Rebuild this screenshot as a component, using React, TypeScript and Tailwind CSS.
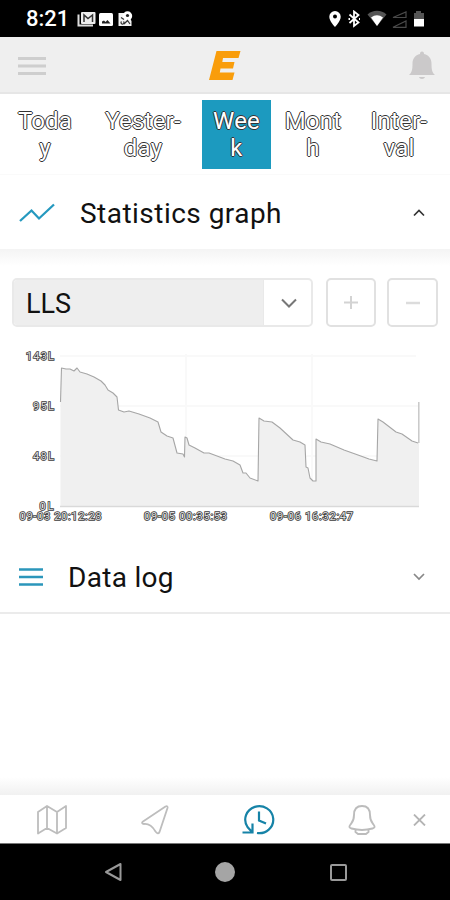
import type { ReactNode } from 'react';

interface Tab {
  lines: string[];
  width: string;
  active?: boolean;
}

const tabs: Tab[] = [
  { lines: ['Toda', 'y'], width: 'w-[70px]' },
  { lines: ['Yester-', 'day'], width: 'ml-[14px] w-[98px]' },
  { lines: ['Wee', 'k'], width: 'ml-[10px] w-[69px]', active: true },
  { lines: ['Mont', 'h'], width: 'ml-[7px] w-[70px]' },
  { lines: ['Inter-', 'val'], width: 'ml-[16px] w-[70px]' },
];

const levels =
  '60.5,62 61.5,28 66,29 70,29 74,31 77,28 80,32 87,34 94,37 101,41 105,45 108,50 113,53 117,57 118.5,70 124,72 129,71 139,74 150,78 158,82 161,92 167,96 173,98 177,113 183,114 184.5,117 185,97 187,98 189,105 195,108 204,113 209,113 225,119 233,121 240,125 243,133 246,133 250,138 258,141 259,78 264,81 272,82 280,88 293,100 300,102 305,105 306,127 308,128 310,138 313,141 316,141 316,99 321,102 330,104 344,110 358,115 369,119 377,121 378,79 383,82 396,92 402,94 412,101 418,103';

function Chart() {
  const outline = '[paint-order:stroke] stroke-[#3c3c3c] stroke-[1.6px] fill-[#ddd]';

  return (
    <svg className="block h-[198px] w-[450px]" viewBox="0 0 450 198">
      <g fill="none" stroke="#f9f9f9" strokeWidth="2">
        <path d="M60 16H416M60 66H419M60 116H419M186 14V167M312 14V167" />
      </g>
      <polygon points={`60.5,167 ${levels} 419,103 419,167`} fill="#f0f0f0" />
      <path d="M60 166.5H419" stroke="#d9d9d9" strokeWidth="1.5" />
      <polyline points={levels} fill="none" stroke="#a6a6a6" strokeWidth="1.1" strokeLinejoin="round" />
      <path d="M418.8 62V103" stroke="#c8c8c8" strokeWidth="1.5" />
      <g className={outline} fontSize="11">
        <text x="26" y="19.5" textLength="28">143L</text>
        <text x="33" y="69.5" textLength="21">95L</text>
        <text x="33" y="120" textLength="21">48L</text>
        <text x="39.5" y="170" textLength="14">0L</text>
      </g>
      <g className={outline} fontSize="11" textAnchor="middle">
        <text x="60.5" y="180" textLength="82">09-03 20:12:28</text>
        <text x="185.5" y="180" textLength="83">09-05 00:35:53</text>
        <text x="311.5" y="180" textLength="83">09-06 16:32:47</text>
      </g>
    </svg>
  );
}

function StatusBar() {
  return (
    <div className="flex h-[37px] shrink-0 items-center bg-black pl-[26px] pr-[24px] pt-px text-white">
      <span className="w-[51px] text-[22px] font-medium leading-none">8:21</span>
      <svg width="56" height="16" viewBox="0 0 56 16">
        <path d="M1.5 3.5V14.5H16" fill="none" stroke="#ddd" strokeWidth="2" />
        <rect x="4" y="1" width="14.5" height="12" rx="1" fill="#eee" />
        <path d="M7 11V4L11 7.500L15.500 4V11" fill="none" stroke="#333" strokeWidth="1.5" />
        <rect x="22" y="2" width="14" height="13" rx="1.500" fill="#fff" />
        <path d="M25 12.500v-2l2-1 1.500 1.500 2-2 3 3.500z" fill="#222" />
        <path d="M41.500 2h8l5 8v5h-13z" fill="#f4f4f4" />
        <circle cx="50.500" cy="5" r="4.700" fill="#fff" />
        <circle cx="50.500" cy="4.500" r="1.600" fill="#222" />
        <path d="M44.500 10.500a1.500 1.500 0 1 0 2 0M47 13l3.500-3.500L53 13M44 6.500l3 2" fill="none" stroke="#333" strokeWidth="1.200" />
      </svg>
      <svg className="ml-auto" width="98" height="18" viewBox="0 0 98 18">
        <path d="M7 1a5.700 5.700 0 0 0-5.700 5.700C1.300 11 7 17 7 17s5.700-6 5.700-10.300A5.700 5.700 0 0 0 7 1z" fill="#fff" />
        <circle cx="7" cy="6.500" r="2" fill="#000" />
        <path d="M21.500 4.500l9 8-4.500 3.500V1.500l4.500 3.500-9 8M20.500 9h1.500M31 9h1" fill="none" stroke="#fff" strokeWidth="1.800" />
        <path d="M39.500 4.500a14 14 0 0 1 19 0L49 16z" fill="#555" />
        <path d="M43 7.500a10 10 0 0 1 12 0L49 16z" fill="#fff" />
        <path d="M65 7.500h13V2zM65 17.300h13V11z" fill="none" stroke="#4a4a4a" strokeWidth="1.200" />
        <path d="M88 1h5v2h3v6H86V3h2z" fill="#555" />
        <path d="M86 9h10v7.500H86z" fill="#fff" />
      </svg>
    </div>
  );
}

function Header() {
  return (
    <header className="flex h-[57px] shrink-0 items-center justify-between border-b-2 border-[#e6e6e6] bg-[#efefef] pl-[18px] pr-[15px]">
      <svg width="28" height="20" viewBox="0 0 28 20" stroke="#cecece" strokeWidth="3">
        <path d="M0 3.500H28M0 11H28M0 18.500H28" />
      </svg>
      <svg className="mr-[5px]" width="32" height="30" viewBox="0 0 32 30" fill="#f99d0b">
        <path d="M7.500 1H31.500L29.500 8H14L13.300 12H25.500L24 18.500H11.500L10.800 22.500H25.500L23.500 30H0z" />
      </svg>
      <svg width="26" height="30" viewBox="0 0 26 30" fill="#cbc9ca">
        <path d="M13 1.500c1.500 0 2 1 2 2.500 5 1 7.500 5 7.500 9.500 0 6 .5 9 3.500 11.500H0c3-2.500 3.500-5.500 3.500-11.500C3.500 9 6 5 11 4c0-1.500.5-2.500 2-2.500zM10 27h6c-.5 2.500-5.500 2.500-6 0z" />
      </svg>
    </header>
  );
}

interface SectionProps {
  icon: ReactNode;
  title: string;
  open?: boolean;
}

function SectionTitle({ icon, title, open }: SectionProps) {
  return (
    <div className={`flex h-[74px] shrink-0 items-center pl-[19px] pr-[25px] ${open ? 'pt-[2px]' : 'pt-[4px]'}`}>
      {icon}
      <h2 className={`pt-[2px] text-[28px] leading-none ${open ? 'tracking-[0.47px]' : 'tracking-[0.3px]'}`}>{title}</h2>
      <svg className="ml-auto" width="12" height="8" viewBox="0 0 12 8" fill="none" strokeWidth="1.7">
        <path d={open ? 'M1 6.500L6 1.500L11 6.500' : 'M1 1L6 6L11 1'} stroke={open ? '#333' : '#888'} />
      </svg>
    </div>
  );
}

export default function App() {
  return (
    <div className="flex h-[900px] w-[450px] flex-col overflow-hidden bg-white font-[Roboto,sans-serif] text-[#111]">
      <StatusBar />
      <Header />

      {/* Period tabs */}
      <nav className="flex h-[81px] shrink-0 items-start border-b border-[#fafafa] pl-[10px] pt-[6px]">
        {tabs.map((tab) => (
          <button
            key={tab.lines[0]}
            className={`${tab.width} h-[69px] shrink-0 pt-px pb-0 text-center text-[24px] leading-[27px] tracking-[0.2px] text-white [text-shadow:-1px_0_#333,1px_0_#333,0_-1px_#333,0_1px_#333] ${
              tab.active ? 'bg-[#1c9abf]' : ''
            }`}
          >
            {tab.lines.map((line) => (
              <span key={line} className="block">{line}</span>
            ))}
          </button>
        ))}
      </nav>

      <SectionTitle
        open
        title="Statistics graph"
        icon={
          <svg className="mr-[25px]" width="36" height="20" viewBox="0 0 36 20" fill="none" stroke="#2599bf" strokeWidth="2.3">
            <path d="M1 18L12.500 7.500L20 15.500L35 1.500" />
          </svg>
        }
      />
      <div className="h-[17px] shrink-0 bg-linear-to-b from-[#f4f4f4] to-white" />

      {/* Sensor selector */}
      <div className="mt-[12px] flex h-[49px] shrink-0 items-stretch px-[12px]">
        <div className="flex w-[301px] overflow-hidden rounded-[5px] border-2 border-[#e9e9e9]">
          <div className="flex flex-1 items-center bg-[#eee] pl-[12px] pt-[3px] text-[27px]">LLS</div>
          <div className="flex w-[48px] items-center justify-center border-l border-[#e9e9e9] pl-[2px]">
            <svg width="16" height="10" viewBox="0 0 16 10" fill="none" stroke="#777" strokeWidth="2">
              <path d="M1 1.500L8 8.500L15 1.500" />
            </svg>
          </div>
        </div>
        <button className="ml-[13px] flex w-[50px] items-center justify-center rounded-[5px] border-2 border-[#e1e1e1]">
          <svg width="14" height="14" viewBox="0 0 14 14" stroke="#d3d3d3" strokeWidth="2">
            <path d="M0 6.500H14M7 0V13" />
          </svg>
        </button>
        <button className="ml-[11px] flex w-[51px] items-center justify-center rounded-[5px] border-2 border-[#e1e1e1]">
          <svg width="14" height="14" viewBox="0 0 14 14" stroke="#dcdcdc" strokeWidth="2.5">
            <path d="M0 7H14" />
          </svg>
        </button>
      </div>

      <div className="mt-[13px] shrink-0">
        <Chart />
      </div>

      <div className="border-b-2 border-[#ebebeb]">
        <SectionTitle
          title="Data log"
          icon={
            <svg className="mr-[25px]" width="24" height="20" viewBox="0 0 24 20" stroke="#2b96bb" strokeWidth="2.3">
              <path d="M0 2.500H24M0 10H24M0 17.500H24" />
            </svg>
          }
        />
      </div>

      {/* Bottom navigation */}
      <div className="mt-auto h-[18px] shrink-0 bg-linear-to-b from-white to-[#f1f1f1]" />
      <nav className="flex h-[48px] shrink-0 items-center bg-white pl-[37px] pr-[24px] pt-[2px]">
        <svg width="30" height="30" viewBox="0 0 30 30" fill="none" stroke="#bdbdbd" strokeWidth="1.8" strokeLinejoin="round">
          <path d="M1 7L10 1L20 7L29 1V23L20 28.500L10 23L1 28.500zM10 1V23M20 7V28.500" />
        </svg>
        <svg className="ml-[74px]" width="28" height="30" viewBox="0 0 28 30" fill="none" stroke="#bdbdbd" strokeWidth="1.800" strokeLinejoin="round">
          <path d="M24.500 1.500L2 16.500C0.500 17.600 1 19 3 19C8 18.500 11 20.500 14.500 26.500Q17 30 18.500 27L26.500 3Q27 0.500 24.500 1.500z" />
        </svg>
        <svg className="ml-[73px]" width="33" height="30" viewBox="0 0 33 30" fill="none" stroke="#1683a7" strokeWidth="2.200">
          <path d="M10 27L5.500 22A14 13.500 0 1 1 15 28M0.500 27.500H10.500V18.500M17 6.500V15.500L24 18.500" />
        </svg>
        <svg className="ml-[73px]" width="28" height="30" viewBox="0 0 28 30" fill="none" stroke="#bcbcbc" strokeWidth="1.900" strokeLinejoin="round">
          <path d="M14 1C8 1 6 5 6 10C6 16 4.500 17 2.500 19.500C0.500 22 1.500 23 3.500 23.500C10 25.300 18 25.300 24.500 23.500C26.500 23 27.500 22 25.500 19.500C23.500 17 22 16 22 10C22 5 20 1 14 1zM7.500 25V27L10 29H18L20.500 27V25" />
        </svg>
        <svg className="ml-auto" width="13" height="12" viewBox="0 0 13 12" stroke="#b4b4b4" strokeWidth="1.800">
          <path d="M1 0.500L12 11.500M12 0.500L1 11.500" />
        </svg>
      </nav>

      {/* Android buttons */}
      <div className="flex h-[57px] shrink-0 items-center border-t border-[#777] bg-black pl-[104px] pr-[103px]">
        <svg width="18" height="20" viewBox="0 0 18 20" fill="none" stroke="#999" strokeWidth="2" strokeLinejoin="round">
          <path d="M16.500 2V18L2 10z" />
        </svg>
        <div className="ml-[93px] h-[20px] w-[20px] rounded-full bg-[#a5a5a5]" />
        <div className="ml-auto h-[17px] w-[17px] rounded-[2px] border-2 border-[#999]" />
      </div>
    </div>
  );
}
